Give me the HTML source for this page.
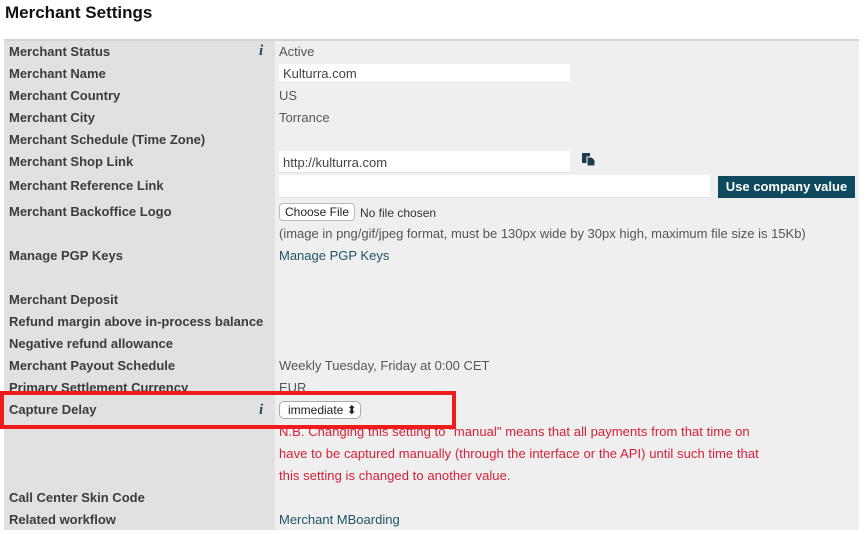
<!DOCTYPE html>
<html><head><meta charset="utf-8"><style>
*{margin:0;padding:0;box-sizing:border-box}
body{width:865px;height:534px;background:#fff;font-family:"Liberation Sans",sans-serif;position:relative;overflow:hidden}
h1{position:absolute;left:5px;top:3px;font-size:17px;font-weight:bold;color:#111}
.lc{position:absolute;left:4px;top:39px;width:271px;height:491px;background:#e1e1e1;border-top:2px solid #d4d4d4}
.vc{position:absolute;left:275px;top:39px;width:584px;height:491px;background:#efefef;border-top:2px solid #d4d4d4}
.l{position:absolute;left:9px;font-size:13px;font-weight:bold;color:#3c3c3c;line-height:16px;margin-top:1px}
.v{position:absolute;left:279px;font-size:13px;color:#555;line-height:16px;margin-top:1px}
.i{position:absolute;left:259px;font:italic bold 15px "Liberation Serif",serif;color:#1c4f63;margin-top:1px}
.inp{position:absolute;background:#fff;border-bottom:1px solid #e3e3e3;font-size:13px;color:#444;padding:3px 4px;line-height:16px}
.red{color:#d6203a;letter-spacing:0.06px}
a{color:#1c5468;text-decoration:none}
</style></head><body>
<h1>Merchant Settings</h1>
<div class="lc"></div><div class="vc"></div>
<div class="l" style="top:43px">Merchant Status</div><span class="i" style="top:42px">i</span><div class="v" style="top:43px">Active</div>
<div class="l" style="top:65px">Merchant Name</div><div class="inp" style="left:279px;top:64px;width:291px;height:19px;padding-top:2px">Kulturra.com</div>
<div class="l" style="top:87px">Merchant Country</div><div class="v" style="top:87px">US</div>
<div class="l" style="top:109px">Merchant City</div><div class="v" style="top:109px">Torrance</div>
<div class="l" style="top:131px">Merchant Schedule (Time Zone)</div>
<div class="l" style="top:153px">Merchant Shop Link</div><div class="inp" style="left:279px;top:151px;width:291px;height:22px;padding-top:4px">http://kulturra.com</div>
<svg style="position:absolute;left:582px;top:153px" width="13" height="13" viewBox="0 0 13 13"><rect x="0" y="0" width="8" height="10" fill="#1c3c4c"/><path d="M5 4h5l3 3v6H5z" fill="#1c3c4c" stroke="#fff" stroke-width="1"/></svg>
<div class="l" style="top:177px">Merchant Reference Link</div><div class="inp" style="left:279px;top:175px;width:431px;height:23px"></div>
<div style="position:absolute;left:718px;top:176px;width:137px;height:22px;background:#0d4a5e;color:#fff;font-weight:bold;font-size:13px;text-align:center;line-height:22px">Use company value</div>
<div class="l" style="top:203px">Merchant Backoffice Logo</div>
<div style="position:absolute;left:279px;top:203px;width:76px;height:18px;background:#fff;border:1px solid #bbb;border-radius:4px;font-size:12px;line-height:16px;text-align:center;color:#222">Choose File</div>
<div class="v" style="top:204px;left:360px;font-size:12px;color:#333">No file chosen</div>
<div class="v" style="top:225px">(image in png/gif/jpeg format, must be 130px wide by 30px high, maximum file size is 15Kb)</div>
<div class="l" style="top:247px">Manage PGP Keys</div><div class="v" style="top:247px"><a>Manage PGP Keys</a></div>
<div class="l" style="top:291px">Merchant Deposit</div>
<div class="l" style="top:313px">Refund margin above in-process balance</div>
<div class="l" style="top:335px">Negative refund allowance</div>
<div class="l" style="top:357px">Merchant Payout Schedule</div><div class="v" style="top:357px">Weekly Tuesday, Friday at 0:00 CET</div>
<div class="l" style="top:379px">Primary Settlement Currency</div><div class="v" style="top:379px">EUR</div>
<div class="l" style="top:401px">Capture Delay</div><span class="i" style="top:401px">i</span>
<div style="position:absolute;left:279px;top:401px;width:82px;height:18px;background:#fff;border:1px solid #aaa;border-radius:5px;font-size:12px;line-height:16px;padding-left:8px;color:#222">immediate ⬍</div>
<div class="v red" style="top:423px">N.B. Changing this setting to "manual" means that all payments from that time on</div>
<div class="v red" style="top:445px">have to be captured manually (through the interface or the API) until such time that</div>
<div class="v red" style="top:467px">this setting is changed to another value.</div>
<div class="l" style="top:489px">Call Center Skin Code</div>
<div class="l" style="top:511px">Related workflow</div><div class="v" style="top:511px"><a>Merchant MBoarding</a></div>
<div style="position:absolute;left:0;top:391px;width:456px;height:38px;border:4px solid #f01c1c"></div>
</body></html>
